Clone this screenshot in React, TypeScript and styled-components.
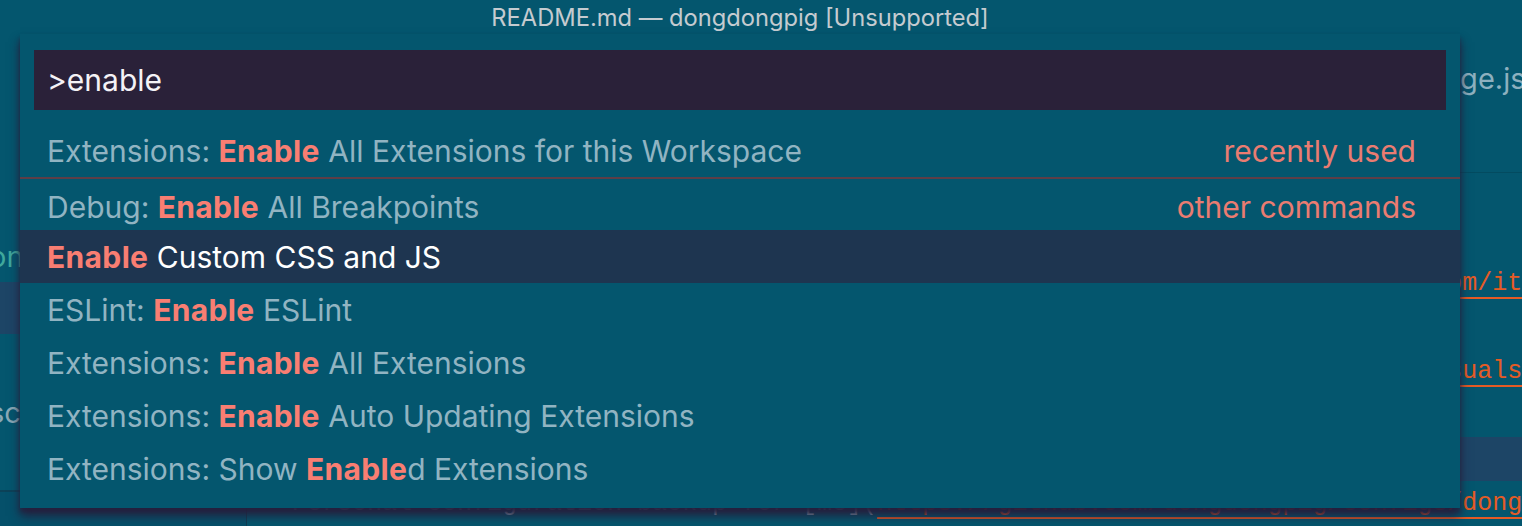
import React from "react";
import styled, { createGlobalStyle } from "styled-components";

const GlobalStyle = createGlobalStyle`
  html, body {
    margin: 0;
    padding: 0;
    background: #04566e;
  }
  body {
    width: 1522px;
    height: 526px;
    overflow: hidden;
    font-family: Inter, "Noto Sans", sans-serif;
  }
`;

const Window = styled.div`
  position: relative;
  width: 1522px;
  height: 526px;
  overflow: hidden;
  background: #04566e;
  display: flex;
  flex-direction: column;
`;

const TitleBar = styled.div`
  height: 34px;
  flex: none;
  display: flex;
  justify-content: center;
  align-items: center;
  padding-right: 42px;
  color: #c5cbd0;
  font-size: 23.7px;
`;

const Workbench = styled.div`
  flex: 1;
  display: flex;
  min-height: 0;
`;

const Sidebar = styled.div`
  width: 247px;
  flex: none;
  display: flex;
  flex-direction: column;
  border-right: 1px solid #0f3c52;
  box-sizing: border-box;
`;

const SideTitle = styled.div`
  height: 144px;
  flex: none;
`;

const TreeItem = styled.div<{ $selected?: boolean; $tone?: string }>`
  height: 52px;
  flex: none;
  display: flex;
  align-items: center;
  font-size: 29px;
  white-space: nowrap;
  overflow: hidden;
  text-indent: -11px;
  color: ${(p) => p.$tone || "#8aa9b6"};
  background: ${(p) => (p.$selected ? "#1d4566" : "transparent")};
`;

const SectionHeader = styled.div`
  height: 36px;
  border-top: 2px solid #0c4258;
  background: #05506a;
`;

const Editor = styled.div`
  flex: 1;
  display: flex;
  flex-direction: column;
  min-width: 0;
`;

const TabBar = styled.div`
  height: 88px;
  flex: none;
  display: flex;
`;

const Tab = styled.div<{ $width?: number; $active?: boolean }>`
  width: ${(p) => (p.$width ? `${p.$width}px` : "auto")};
  flex: none;
  display: flex;
  align-items: center;
  padding-left: 20px;
  box-sizing: border-box;
  font-size: 29px;
  white-space: nowrap;
  color: ${(p) => (p.$active ? "#ffffff" : "#8db0bf")};
`;

const Breadcrumbs = styled.div`
  height: 50px;
  flex: none;
  border-bottom: 1px solid rgba(0, 0, 0, 0.12);
`;

const Lines = styled.div`
  display: flex;
  flex-direction: column;
`;

const Line = styled.div<{ $current?: boolean }>`
  height: 44px;
  flex: none;
  display: flex;
  align-items: center;
  padding-left: 15px;
  font-family: "Liberation Mono", "DejaVu Sans Mono", monospace;
  font-size: 25px;
  white-space: pre;
  color: #8fb3c2;
  background: ${(p) => (p.$current ? "#1d4566" : "transparent")};
`;

const Link = styled.span`
  color: #e55b25;
  text-decoration: underline;
  text-decoration-thickness: 2px;
  text-underline-offset: 7px;
`;

const Palette = styled.div`
  position: absolute;
  left: 20px;
  top: 34px;
  width: 1440px;
  padding: 16px 0 13px;
  background: #04566e;
  box-shadow: 0 8px 10px rgba(38, 30, 60, 0.95), 0 4px 4px rgba(38, 30, 60, 0.6);
`;

const InputBox = styled.div`
  margin: 0 14px 14px;
  height: 60px;
  display: flex;
  align-items: center;
  padding-left: 13px;
  background: #2a2139;
  color: #f4f2f6;
  font-size: 30px;
`;

const Row = styled.div<{ $selected?: boolean; $separator?: boolean }>`
  height: 53px;
  box-sizing: border-box;
  display: flex;
  align-items: center;
  justify-content: space-between;
  padding: ${(p) => (p.$separator ? "5px 44px 0 27px" : "0 44px 0 27px")};
  border-top: ${(p) => (p.$separator ? "2px solid #5e3e47" : "none")};
  background: ${(p) => (p.$selected ? "#1e3550" : "transparent")};
  color: ${(p) => (p.$selected ? "#ffffff" : "#91b4c2")};
  font-size: 30px;
  white-space: nowrap;
`;

const Match = styled.b`
  font-weight: 700;
  letter-spacing: 0.35px;
  color: #f97e72;
`;

const Detail = styled.span`
  color: #ea7c71;
`;

type Command = {
  parts: [string, string, string];
  detail?: string;
};

const commands: Command[] = [
  { parts: ["Extensions: ", "Enable", " All Extensions for this Workspace"], detail: "recently used" },
  { parts: ["Debug: ", "Enable", " All Breakpoints"], detail: "other commands" },
  { parts: ["", "Enable", " Custom CSS and JS"] },
  { parts: ["ESLint: ", "Enable", " ESLint"] },
  { parts: ["Extensions: ", "Enable", " All Extensions"] },
  { parts: ["Extensions: ", "Enable", " Auto Updating Extensions"] },
  { parts: ["Extensions: Show ", "Enable", "d Extensions"] },
];

type EditorLine = { plain?: string; link?: string; current?: boolean };

const editorLines: EditorLine[] = [
  {},
  {},
  { plain: "- Custom CSS and JS Loader, see [repo](".padEnd(63), link: "https://github.com/itsmehemant7/vscode-custom-css" },
  {},
  { plain: "- Theme from the marketplace (".padEnd(57), link: "https://marketplace.visualstudio.com/items?itemName=RobbOwen" },
  {},
  { current: true },
  { plain: "- Personal configuration backup for [me](".padEnd(41), link: "https://github.com/dongdongpig/configs/dongdongpig.json" },
  {},
];

export default function App() {
  return (
    <>
      <GlobalStyle />
      <Window>
        <TitleBar>README.md — dongdongpig [Unsupported]</TitleBar>
        <Workbench>
          <Sidebar>
            <SideTitle />
            <TreeItem />
            <TreeItem $tone="#3fa89c">on</TreeItem>
            <TreeItem $selected />
            <TreeItem />
            <TreeItem>sc</TreeItem>
            <TreeItem />
            <SectionHeader />
          </Sidebar>
          <Editor>
            <TabBar>
              <Tab $width={280} $active>README.md</Tab>
              <Tab $width={300}>CHANGELOG.md</Tab>
              <Tab $width={270}>extension.js</Tab>
              <Tab $width={260}>.eslintrc.json</Tab>
              <Tab>package.json</Tab>
            </TabBar>
            <Breadcrumbs />
            <Lines>
              {editorLines.map((l, i) => (
                <Line key={i} $current={l.current}>
                  {l.plain}
                  {l.link && <Link>{l.link}</Link>}
                </Line>
              ))}
            </Lines>
          </Editor>
        </Workbench>

        <Palette>
          <InputBox>&gt;enable</InputBox>
          {commands.map((c, i) => (
            <Row key={i} $selected={i === 2} $separator={i === 1}>
              <span>
                {c.parts[0]}
                <Match>{c.parts[1]}</Match>
                {c.parts[2]}
              </span>
              {c.detail && <Detail>{c.detail}</Detail>}
            </Row>
          ))}
        </Palette>
      </Window>
    </>
  );
}
